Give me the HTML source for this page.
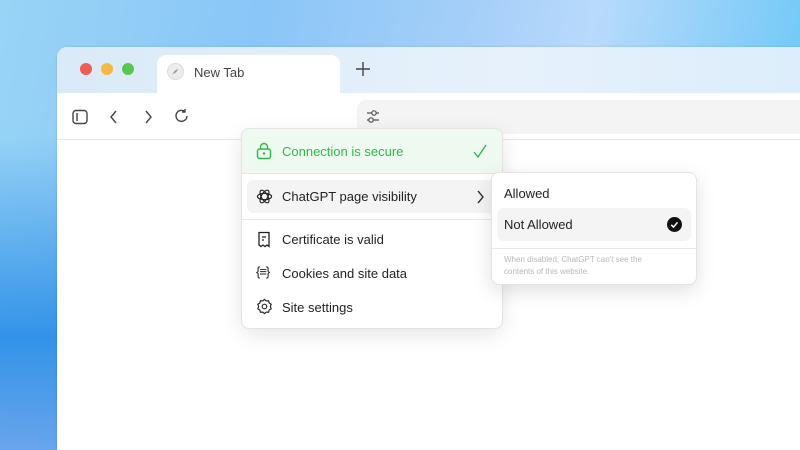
<!DOCTYPE html>
<html><head><meta charset="utf-8"><style>
*{margin:0;padding:0;box-sizing:border-box}
html,body{width:800px;height:450px;overflow:hidden}
body{position:relative;font-family:"Liberation Sans",sans-serif;
background:linear-gradient(180deg,rgba(150,210,245,0) 0%,rgba(150,210,245,0) 30%,rgba(40,140,230,.9) 75%,rgba(100,160,235,.9) 100%) left/60px 100% no-repeat,
linear-gradient(100deg,#98d4f6 0%,#8ac6f7 30%,#a6cff9 55%,#b8dafb 68%,#5ec4f7 100%);}
.win{position:absolute;left:57px;top:47px;width:760px;height:420px;border-radius:10px;background:#fff;overflow:hidden;box-shadow:0 0 2px rgba(0,0,0,.15)}
.tabbar{position:absolute;left:0;top:0;right:0;height:46px;background:linear-gradient(90deg,#dbeaf8,#e6f1fb 60%,#dcedfb)}
.tab{position:absolute;left:100px;top:8px;width:183px;height:40px;background:#fff;border-radius:9px 9px 0 0}
.dot{position:absolute;top:16px;width:12px;height:12px;border-radius:50%}
.tb{position:absolute;left:0;top:46px;right:0;height:47px;background:#fff;border-bottom:1px solid #e6e6e6}
.addr{position:absolute;left:300px;top:7px;right:0;height:34px;background:#f4f4f4;border-radius:9px 0 0 9px}
.menu{position:absolute;left:241px;top:128px;width:262px;height:201px;background:#fff;border-radius:8px;border:1px solid #e3e3e3;box-shadow:0 6px 20px rgba(0,0,0,.1);overflow:hidden}
.it{position:absolute;left:40px;font-size:13px;color:#222}
.ic{position:absolute;left:14px}
.sub{position:absolute;left:491px;top:172px;width:206px;height:113px;background:#fff;border-radius:8px;border:1px solid #e3e3e3;box-shadow:0 6px 20px rgba(0,0,0,.12)}
</style></head><body>
<div class="win">
 <div class="tabbar">
  <div class="dot" style="left:23px;background:#ee5c56"></div>
  <div class="dot" style="left:44px;background:#f5b942"></div>
  <div class="dot" style="left:65px;background:#5ac54f"></div>
  <div class="tab">
   <div style="position:absolute;left:10px;top:8px;width:17px;height:17px;border-radius:50%;background:#ececec;border:1px solid #ddd"></div>
   <svg style="position:absolute;left:14px;top:12px" width="9" height="9"><path d="M7.5 1.5L3.5 4 1.5 7.5 5.5 5z" fill="#999"/></svg>
   <div style="position:absolute;left:37px;top:10px;font-size:13px;color:#444">New Tab</div>
  </div>
  <svg style="position:absolute;left:298px;top:14px" width="16" height="16"><path d="M8 1v14M1 8h14" stroke="#444" stroke-width="1.4"/></svg>
 </div>
 <div class="tb">
  <svg style="position:absolute;left:15px;top:16px" width="16" height="16"><rect x="1" y="1.5" width="14" height="13" rx="3" fill="none" stroke="#444" stroke-width="1.4"/><path d="M5 4v8" stroke="#444" stroke-width="1.4"/></svg>
  <svg style="position:absolute;left:51px;top:16px" width="12" height="16"><path d="M8 2L3 8l5 6" fill="none" stroke="#444" stroke-width="1.4"/></svg>
  <svg style="position:absolute;left:85px;top:16px" width="12" height="16"><path d="M4 2l5 6-5 6" fill="none" stroke="#444" stroke-width="1.4"/></svg>
  <svg style="position:absolute;left:117px;top:15px" width="16" height="16"><path d="M13 8A5.5 5.5 0 1 1 11 3.6M11 1v3h-3" fill="none" stroke="#444" stroke-width="1.4"/></svg>
  <div class="addr">
   <svg style="position:absolute;left:9px;top:9px" width="14" height="16"><path d="M1 4h12M1 11h12" stroke="#555" stroke-width="1.2"/><circle cx="8" cy="4" r="2.2" fill="#f4f4f4" stroke="#555" stroke-width="1.2"/><circle cx="5" cy="11" r="2.2" fill="#f4f4f4" stroke="#555" stroke-width="1.2"/></svg>
  </div>
 </div>
</div>
<div class="menu">
 <div style="position:absolute;left:0;top:0;right:0;height:45px;background:#eefaf0;border-bottom:1px solid #e6e6e6"></div>
 <svg class="ic" style="top:13px" width="16" height="18"><rect x="1.5" y="7" width="13" height="9.5" rx="2" fill="none" stroke="#2fb84a" stroke-width="1.4"/><path d="M4.5 7V5a3.5 3.5 0 0 1 7 0v2" fill="none" stroke="#2fb84a" stroke-width="1.4"/><circle cx="8" cy="11.5" r="1.2" fill="#2fb84a"/></svg>
 <div class="it" style="top:15px;color:#2fb84a">Connection is secure</div>
 <svg style="position:absolute;left:230px;top:14px" width="16" height="16"><path d="M2 9l4 5 8-12" fill="none" stroke="#2fb84a" stroke-width="1.4"/></svg>
 <div style="position:absolute;left:5px;top:51px;width:251px;height:33px;background:#f4f4f4;border-radius:7px"></div>
 <svg class="ic" style="top:59px" width="17" height="17" viewBox="0 0 24 24"><g fill="none" stroke="#222" stroke-width="1.6"><ellipse cx="12" cy="12" rx="10" ry="4.5"/><ellipse cx="12" cy="12" rx="10" ry="4.5" transform="rotate(60 12 12)"/><ellipse cx="12" cy="12" rx="10" ry="4.5" transform="rotate(120 12 12)"/></g></svg>
 <div class="it" style="top:60px">ChatGPT page visibility</div>
 <svg style="position:absolute;left:234px;top:60px" width="10" height="16"><path d="M2 2l5 6-5 6" fill="none" stroke="#333" stroke-width="1.4"/></svg>
 <div style="position:absolute;left:0;right:0;top:90px;border-top:1px solid #e8e8e8"></div>
 <svg class="ic" style="top:102px" width="16" height="17"><path d="M3 1.5h10v14l-2-1.5-2 1.5-2-1.5-2 1.5-2-1.5z" fill="none" stroke="#222" stroke-width="1.3"/><path d="M6 6h4M6 9h2" stroke="#222" stroke-width="1.3"/></svg>
 <div class="it" style="top:103px">Certificate is valid</div>
 <div class="ic" style="top:135px;font-size:13px;color:#222;letter-spacing:-1px">{≡}</div>
 <div class="it" style="top:137px">Cookies and site data</div>
 <svg class="ic" style="top:169px" width="17" height="17" viewBox="0 0 24 24"><path d="M12 2l2.5 2.2 3.3-.3.8 3.2 2.9 1.7-1.3 3.2 1.3 3.2-2.9 1.7-.8 3.2-3.3-.3L12 22l-2.5-2.2-3.3.3-.8-3.2-2.9-1.7L3.8 12 2.5 8.8l2.9-1.7.8-3.2 3.3.3z" fill="none" stroke="#222" stroke-width="1.6"/><circle cx="12" cy="12" r="3.3" fill="none" stroke="#222" stroke-width="1.6"/></svg>
 <div class="it" style="top:171px">Site settings</div>
</div>
<div class="sub">
 <div style="position:absolute;left:12px;top:13px;font-size:13px;color:#222">Allowed</div>
 <div style="position:absolute;left:5px;top:35px;width:194px;height:33px;background:#f4f4f4;border-radius:7px"></div>
 <div style="position:absolute;left:12px;top:44px;font-size:13px;color:#222">Not Allowed</div>
 <svg style="position:absolute;left:175px;top:44px" width="15" height="15"><circle cx="7.5" cy="7.5" r="7.5" fill="#111"/><path d="M4.3 7.8l2.2 2.3 4-4.8" fill="none" stroke="#fff" stroke-width="1.5"/></svg>
 <div style="position:absolute;left:0;right:0;top:75px;border-top:1px solid #e8e8e8"></div>
 <div style="position:absolute;left:12px;top:81px;font-size:8px;line-height:12px;color:#b8b8b8;width:150px">When disabled, ChatGPT can't see the contents of this website.</div>
</div>
</body></html>
